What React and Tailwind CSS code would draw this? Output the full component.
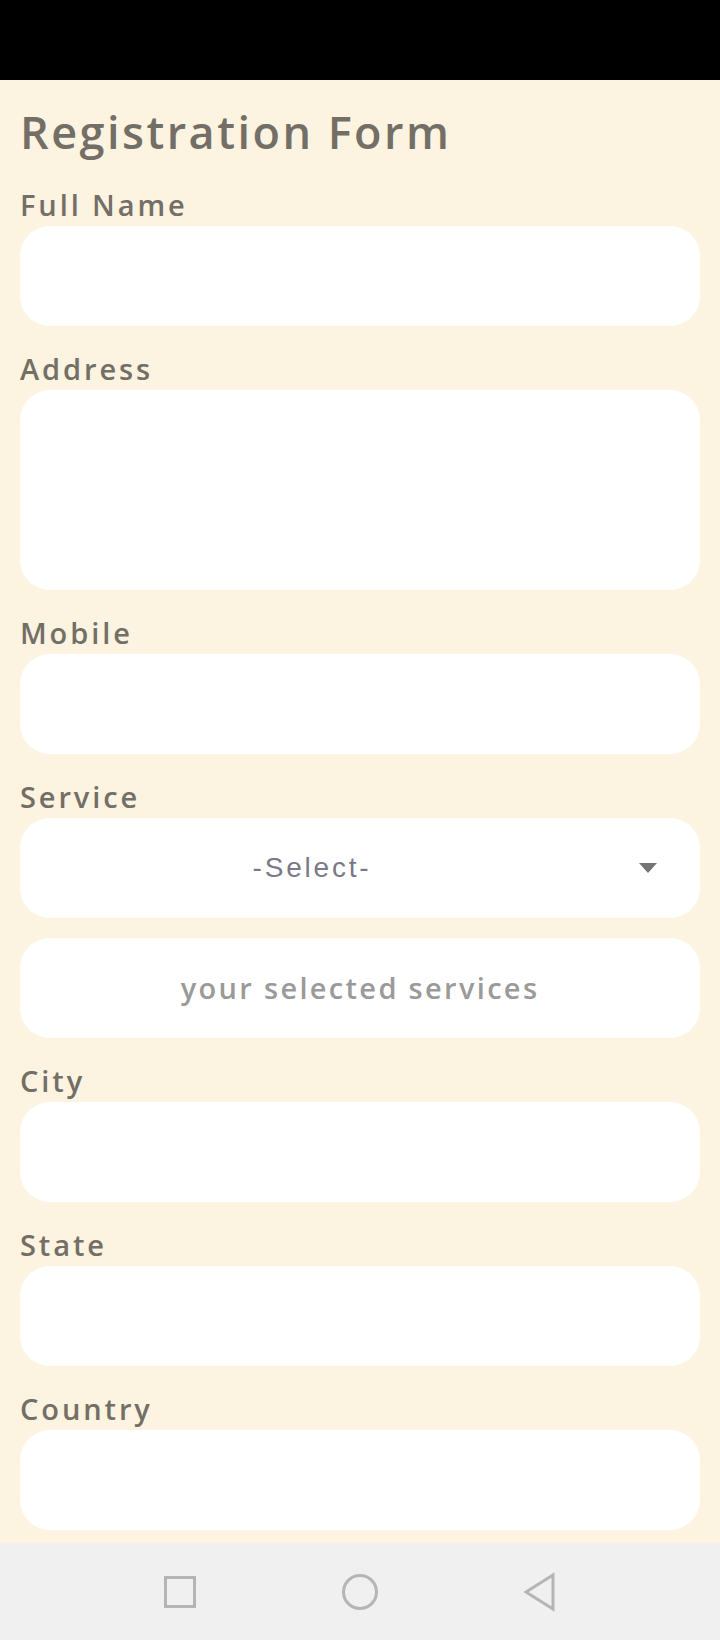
import React from 'react';

const labelFont = { fontFamily: '"Open Sans", sans-serif' };

const Label = ({ children }) => (
  <div className="h-[32px] text-[29px] leading-[32px] font-semibold tracking-[0.1em] text-[#736f66] mb-[5px]">
    {children}
  </div>
);

const Box = ({ className = 'h-[100px]', children }) => (
  <div className={`bg-white rounded-[30px] w-full ${className}`}>{children}</div>
);

const Field = ({ label, tall, last }) => (
  <div className={last ? '' : 'mb-[27px]'}>
    <Label>{label}</Label>
    <Box className={tall ? 'h-[200px]' : 'h-[100px]'} />
  </div>
);

export default function App() {
  return (
    <div className="w-[720px] h-[1640px] flex flex-col bg-[#fcf3e0]" style={labelFont}>
      <div className="h-[80px] bg-black shrink-0" />

      <div className="flex-1 min-h-0 overflow-hidden px-[20px] pt-[26px]">
        <h1 className="text-[45px] leading-[52px] font-semibold tracking-[0.055em] text-[#736f66] mb-[31px]">
          Registration Form
        </h1>

        <Field label="Full Name" />
        <Field label="Address" tall />
        <Field label="Mobile" />

        <div className="mb-[27px]">
          <Label>Service</Label>
          <Box className="h-[100px] flex items-center">
            <span
              className="flex-1 text-center text-[28px] tracking-[0.1em] text-[#7b7889]"
              style={{ fontFamily: '"Liberation Sans", Arial, sans-serif' }}
            >
              -Select-
            </span>
            <svg width="18" height="10" viewBox="0 0 18 10" className="ml-[35px] mr-[43px]">
              <polygon points="0,0 18,0 9,10" fill="#757575" />
            </svg>
          </Box>
          <Box className="h-[100px] mt-[20px] flex items-center justify-center">
            <span className="text-[29px] font-semibold tracking-[0.08em] text-[#9b9a98]">
              your selected services
            </span>
          </Box>
        </div>

        <Field label="City" />
        <Field label="State" />
        <Field label="Country" last />
      </div>

      <div className="h-[97px] shrink-0 bg-[#f0f0f0] grid grid-cols-3 px-[90px] items-center">
        <div className="flex justify-center">
          <svg width="36" height="36" viewBox="0 0 36 36">
            <rect x="3.5" y="3.5" width="29" height="29" fill="none" stroke="#b5b5b5" strokeWidth="3" />
          </svg>
        </div>
        <div className="flex justify-center">
          <svg width="40" height="40" viewBox="0 0 40 40">
            <circle cx="20" cy="20" r="16.5" fill="none" stroke="#b5b5b5" strokeWidth="3" />
          </svg>
        </div>
        <div className="flex justify-center">
          <svg width="36" height="40" viewBox="0 0 36 40">
            <polygon points="31,3 4,20 31,37" fill="none" stroke="#b5b5b5" strokeWidth="3" strokeLinejoin="miter" />
          </svg>
        </div>
      </div>
    </div>
  );
}
